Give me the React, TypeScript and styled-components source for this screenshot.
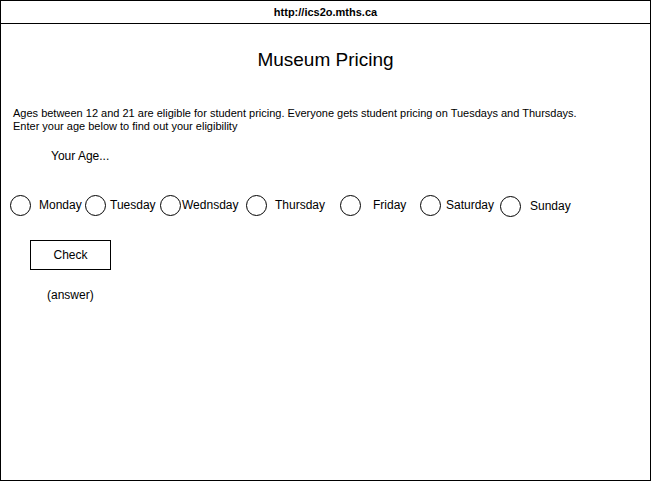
import React from "react";
import styled, { createGlobalStyle } from "styled-components";

const GlobalStyle = createGlobalStyle`
  html, body {
    margin: 0;
    padding: 0;
    background: #ffffff;
  }
  body {
    font-family: "Liberation Sans", Arial, sans-serif;
    color: #000000;
  }
`;

/*
  Styled Components
*/

const Frame = styled.div`
  width: 651px;
  height: 481px;
  box-sizing: border-box;
  border: 1px solid #000000;
  display: flex;
  flex-direction: column;
  background: #ffffff;
`;

const AddressBar = styled.div`
  height: 22px;
  flex: none;
  border-bottom: 1px solid #000000;
  display: flex;
  align-items: center;
  justify-content: center;
  font-size: 11px;
  font-weight: bold;
`;

const Body = styled.div`
  flex: 1;
  display: flex;
  flex-direction: column;
  padding: 0 0 0 12px;
`;

const Title = styled.h1`
  margin: 24px 0 0 0;
  font-size: 19px;
  font-weight: normal;
  text-align: center;
  line-height: 24px;
  padding-right: 12px;
`;

const Intro = styled.p`
  margin: 35px 0 0 0;
  font-size: 11px;
  line-height: 13px;
`;

const AgeField = styled.div`
  margin: 15px 0 0 38px;
  font-size: 12px;
  line-height: 16px;
`;

const DayRow = styled.div`
  display: flex;
  align-items: center;
  margin: 29px 0 0 -3px;
  height: 24px;
`;

const DayOption = styled.label<{ $width: number; $gap: number; $drop?: number }>`
  display: flex;
  align-items: center;
  width: ${(p) => p.$width}px;
  flex: none;
  gap: ${(p) => p.$gap}px;
  font-size: 12px;
  margin-top: ${(p) => (p.$drop ?? 0) * 2}px;
`;

const Circle = styled.span`
  width: 19px;
  height: 19px;
  border: 1px solid #000000;
  border-radius: 50%;
  flex: none;
`;

const CheckButton = styled.button`
  margin: 23px 0 0 17px;
  width: 81px;
  height: 30px;
  border: 1px solid #000000;
  background: #ffffff;
  font-family: "Liberation Sans", Arial, sans-serif;
  font-size: 12px;
  color: #000000;
  padding: 0;
`;

const Answer = styled.div`
  margin: 17px 0 0 34px;
  font-size: 12px;
  line-height: 16px;
`;

const days = [
  { name: "Monday", width: 75, gap: 8 },
  { name: "Tuesday", width: 75, gap: 4 },
  { name: "Wednsday", width: 86, gap: 1 },
  { name: "Thursday", width: 94, gap: 8 },
  { name: "Friday", width: 80, gap: 12 },
  { name: "Saturday", width: 80, gap: 5 },
  { name: "Sunday", width: 80, gap: 9, drop: 1 },
];

export default function App() {
  return (
    <>
      <GlobalStyle />
      <Frame>
        <AddressBar>http://ics2o.mths.ca</AddressBar>
        <Body>
          <Title>Museum Pricing</Title>
          <Intro>
            Ages between 12 and 21 are eligible for student pricing. Everyone gets student pricing on Tuesdays and Thursdays.
            <br />
            Enter your age below to find out your eligibility
          </Intro>
          <AgeField>Your Age...</AgeField>
          <DayRow>
            {days.map((d) => (
              <DayOption key={d.name} $width={d.width} $gap={d.gap} $drop={d.drop}>
                <Circle />
                {d.name}
              </DayOption>
            ))}
          </DayRow>
          <div>
            <CheckButton>Check</CheckButton>
          </div>
          <Answer>(answer)</Answer>
        </Body>
      </Frame>
    </>
  );
}
